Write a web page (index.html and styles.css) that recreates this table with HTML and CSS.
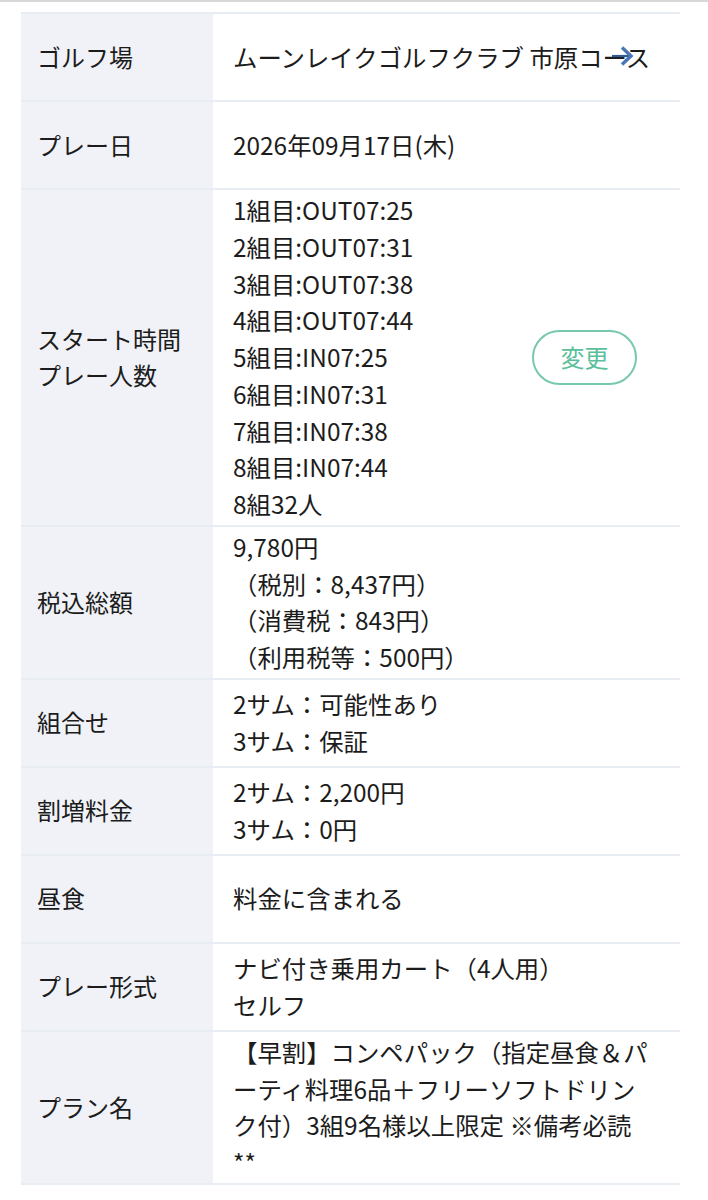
FILE: index.html
```html
<!DOCTYPE html>
<html lang="ja">
<head>
<meta charset="utf-8">
<link rel="stylesheet" href="styles.css">
</head>
<body>
<div class="topline"></div>
<div class="page">
  <div class="table">
    <div class="row">
      <div class="label">ゴルフ場</div>
      <div class="value course">ムーンレイクゴルフクラブ 市原コース
        <svg class="arrow" width="24" height="24" viewBox="0 0 24 24"><path d="M1 12H19" stroke="#2f5a96" stroke-width="2.2" fill="none"/><path d="M11 3.5L20 12L11 20.5" stroke="#4a76b4" stroke-width="3.4" fill="none" stroke-linejoin="miter"/></svg>
      </div>
    </div>
    <div class="row">
      <div class="label">プレー日</div>
      <div class="value">2026年09月17日(木)</div>
    </div>
    <div class="row">
      <div class="label">スタート時間<br>プレー人数</div>
      <div class="value split">
        <div class="lines">
          <div>1組目:OUT07:25</div>
          <div>2組目:OUT07:31</div>
          <div>3組目:OUT07:38</div>
          <div>4組目:OUT07:44</div>
          <div>5組目:IN07:25</div>
          <div>6組目:IN07:31</div>
          <div>7組目:IN07:38</div>
          <div>8組目:IN07:44</div>
          <div>8組32人</div>
        </div>
        <button class="change">変更</button>
      </div>
    </div>
    <div class="row">
      <div class="label">税込総額</div>
      <div class="value">
        <div>9,780円</div>
        <div>（税別：8,437円）</div>
        <div>（消費税：843円）</div>
        <div>（利用税等：500円）</div>
      </div>
    </div>
    <div class="row">
      <div class="label">組合せ</div>
      <div class="value">
        <div>2サム：可能性あり</div>
        <div>3サム：保証</div>
      </div>
    </div>
    <div class="row">
      <div class="label">割増料金</div>
      <div class="value">
        <div>2サム：2,200円</div>
        <div>3サム：0円</div>
      </div>
    </div>
    <div class="row">
      <div class="label">昼食</div>
      <div class="value">料金に含まれる</div>
    </div>
    <div class="row">
      <div class="label">プレー形式</div>
      <div class="value">
        <div>ナビ付き乗用カート（4人用）</div>
        <div>セルフ</div>
      </div>
    </div>
    <div class="row">
      <div class="label">プラン名</div>
      <div class="value plan"><div class="plan-text">【早割】コンペパック（指定昼食＆パーティ料理6品＋フリーソフトドリンク付）3組9名様以上限定 ※備考必読**</div></div>
    </div>
  </div>
</div>
</body>
</html>
```

FILE: styles.css
```css
html, body {
  margin: 0;
  padding: 0;
  background: #ffffff;
}

body {
  font-family: "Noto Sans CJK JP", "Noto Sans", sans-serif;
  font-size: 24.4px;
  line-height: 36.75px;
  color: #1c1c1c;
}

.topline {
  height: 2px;
  background: #d8d8d8;
}

.page {
  padding: 10px 28px 0 21px;
}

.table {
  border-top: 2px solid #e8ecf3;
}

.row {
  display: grid;
  grid-template-columns: 192px 1fr;
  border-bottom: 2px solid #e8ecf3;
}

.label {
  background: #f0f2f7;
  padding: 2px 8px 2px 16px;
  min-height: 82px;
  display: flex;
  flex-direction: column;
  justify-content: center;
  font-size: 24px;
}

.value {
  padding: 2px 20px 2px 20px;
  min-height: 82px;
  display: flex;
  flex-direction: column;
  justify-content: center;
}

.course {
  position: relative;
}

.arrow {
  position: absolute;
  left: 398px;
  top: 30px;
}

.split {
  flex-direction: row;
  align-items: center;
  justify-content: space-between;
  padding-right: 43px;
}

.change {
  font-family: "Noto Sans CJK JP", "Noto Sans", sans-serif;
  font-size: 24px;
  line-height: 30px;
  color: #5cbf9b;
  background: #ffffff;
  border: 2px solid #78c9ab;
  border-radius: 28px;
  width: 105px;
  height: 55px;
  padding: 0;
}

.plan-text {
  width: 418px;
}
```
